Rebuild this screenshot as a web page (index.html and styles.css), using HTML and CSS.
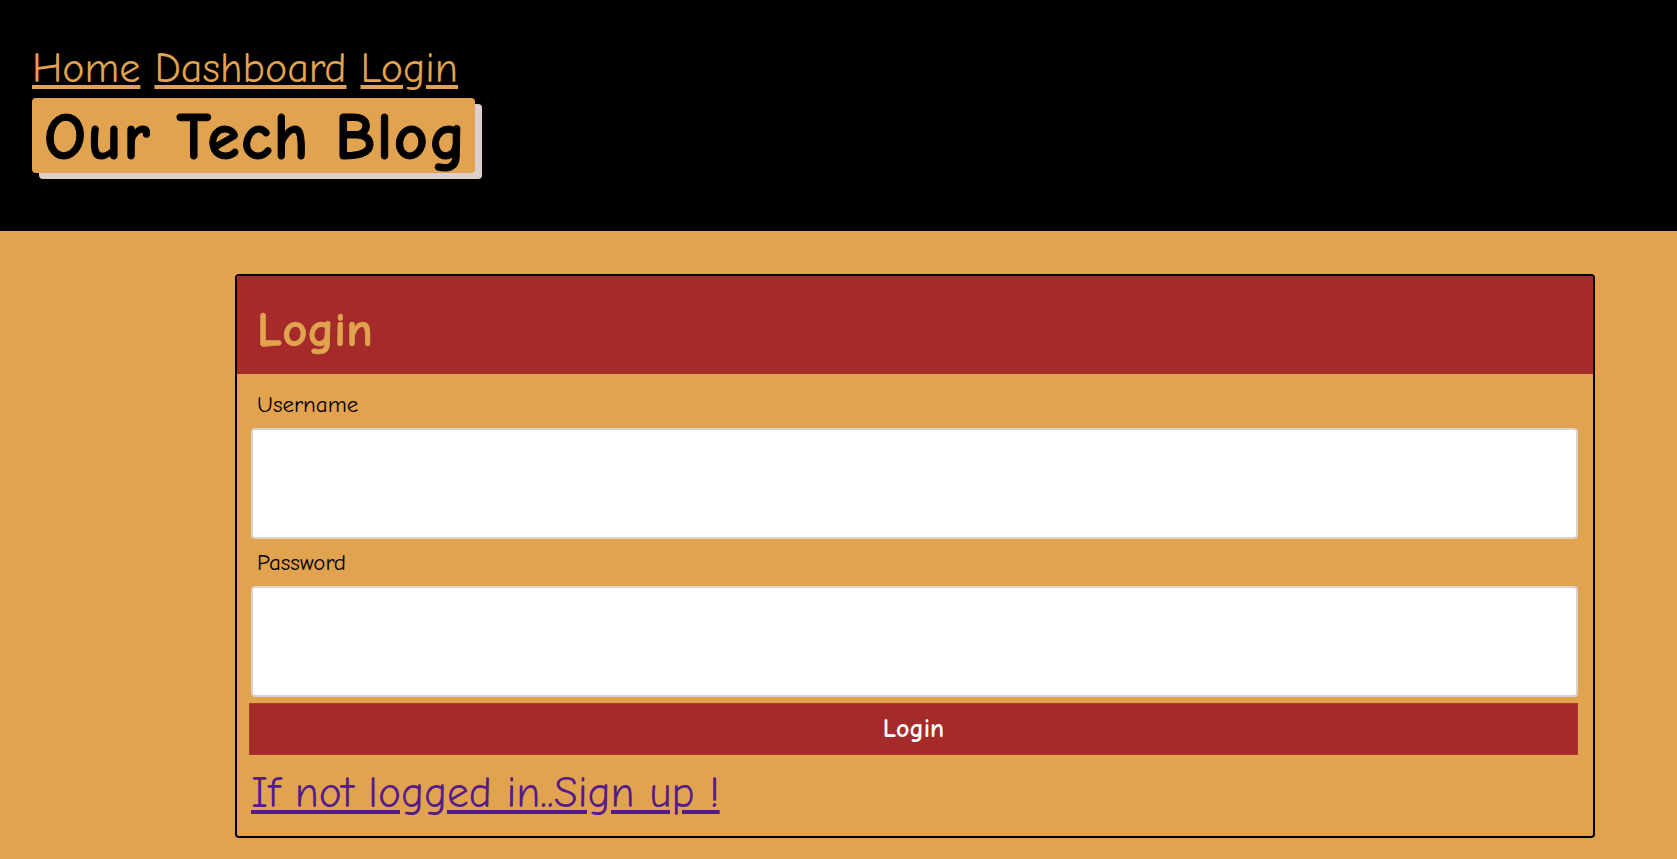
FILE: index.html
```html
<!DOCTYPE html>
<html lang="en">
<head>
<meta charset="utf-8">
<title>Our Tech Blog</title>
<link rel="stylesheet" href="styles.css">
</head>
<body>
<header class="site-header">
  <nav class="nav"><a href="#">Home</a> <a href="#">Dashboard</a> <a href="#">Login</a></nav>
  <h1 class="brand">Our Tech Blog</h1>
</header>
<main class="main">
  <section class="card">
    <div class="card-header"><h2 class="card-title">Login</h2></div>
    <form class="card-body">
      <label class="field-label" for="username">Username</label>
      <input class="field-input" id="username" type="text">
      <label class="field-label" for="password">Password</label>
      <input class="field-input" id="password" type="password">
      <button class="submit" type="button">Login</button>
      <a class="signup" href="#">If not logged in..Sign up !</a>
    </form>
  </section>
</main>
</body>
</html>
```
FILE: styles.css
```css
html, body {
  margin: 0;
  padding: 0;
}
body {
  background: #e1a34f;
  font-family: "Comic Sans MS", "Comic Neue", "Open Sans", sans-serif;
  color: #000;
}
.site-header {
  background: #000;
  height: 231px;
  box-sizing: border-box;
  padding: 43px 0 0 32px;
  display: flex;
  flex-direction: column;
  align-items: flex-start;
}
.nav {
  font-size: 42px;
  line-height: 52px;
  height: 52px;
}
.nav a {
  color: #e1a34f;
  text-decoration: underline;
}
.brand {
  margin: 3px 0 0 0;
  background: #e1a34f;
  border-radius: 4px;
  box-shadow: 7px 6px 0 #dcd0cc;
  width: 443px;
  height: 75px;
  box-sizing: border-box;
  padding: 6px 0 0 12px;
  font-size: 66px;
  font-weight: 900;
  line-height: 69px;
  letter-spacing: 1.5px;
  white-space: nowrap;
  -webkit-text-stroke: 1px #000;
}
.main {
  padding: 43px 82px 16px 235px;
}
.card {
  border: 2px solid #000;
  border-radius: 4px;
  overflow: hidden;
}
.card-header {
  background: #a52a2a;
  height: 98px;
  box-sizing: border-box;
  padding: 10px 0 0 20px;
  display: flex;
  align-items: center;
}
.card-title {
  margin: 0;
  color: #e1a34f;
  font-size: 49px;
  font-weight: 900;
  -webkit-text-stroke: 0.6px #e1a34f;
}
.card-body {
  display: flex;
  flex-direction: column;
  align-items: stretch;
  padding: 7px 15px 15px 12px;
}
.field-label {
  display: block;
  font-size: 23px;
  line-height: 39px;
  margin: 4px 0;
  padding-left: 8px;
}
.field-input {
  margin: 0 0 0 2px;
  height: 111px;
  box-sizing: border-box;
  border: 2px solid #d9d2cf;
  border-radius: 4px;
  background: #fff;
  font-size: 20px;
}
.submit {
  margin-top: 6px;
  height: 52px;
  border: 1px solid #b03a2e;
  background: #a52a2a;
  color: #fff;
  font-family: inherit;
  font-size: 26px;
  font-weight: bold;
}
.signup {
  margin: 10px 0 0 2px;
  align-self: flex-start;
  color: #551a8b;
  font-size: 43.5px;
  line-height: 56px;
}
```
